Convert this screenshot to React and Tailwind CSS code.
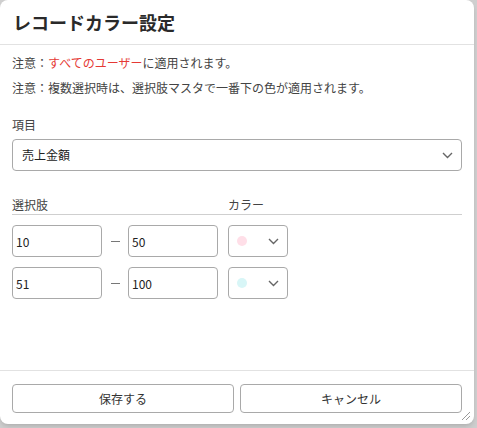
import React from 'react';

const font = { fontFamily: '"Noto Sans CJK JP", "Noto Sans", sans-serif' };

const Chevron = ({ className = '' }) => (
  <svg className={className} width="11" height="7" viewBox="0 0 11 7" fill="none">
    <path d="M1 1l4.5 4.5L10 1" stroke="#666" strokeWidth="1.4" />
  </svg>
);

const ChoiceRow = ({ from, to, dot }) => (
  <div className="flex items-center">
    <input
      defaultValue={from}
      className="w-[90px] h-[32px] border border-[#a9a9a9] rounded px-[3px] text-[12px] text-[#222] outline-none"
    />
    <div className="w-[26px] flex justify-center">
      <span className="w-[9px] h-px bg-[#777]" />
    </div>
    <input
      defaultValue={to}
      className="w-[90px] h-[32px] border border-[#a9a9a9] rounded px-[3px] text-[12px] text-[#222] outline-none"
    />
    <div className="ml-[10px] w-[60px] h-[32px] border border-[#a9a9a9] rounded flex items-center pl-[8px] pr-[8px] justify-between">
      <span className={`w-[10px] h-[10px] rounded-full ${dot}`} />
      <Chevron />
    </div>
  </div>
);

export default function App() {
  return (
    <div className="w-[477px] h-[428px] bg-[#cfcfcf] overflow-hidden" style={font}>
      <div className="relative w-[474px] h-[424px] bg-white rounded-lg shadow-md flex flex-col text-[#333]">
        <div className="h-[45px] border-b border-[#e2e2e2] px-[13px] flex items-center">
          <h1 className="text-[18px] font-bold text-[#2a2a2a]">レコードカラー設定</h1>
        </div>

        <div className="flex-1 px-3 pt-[5px]">
          <p className="text-[12px] leading-[25px] text-[#444]">
            注意：<span className="text-[#e53935]">すべてのユーザー</span>に適用されます。
          </p>
          <p className="text-[12px] leading-[25px] text-[#444]">
            注意：複数選択時は、選択肢マスタで一番下の色が適用されます。
          </p>

          <div className="mt-[16px] text-[12px] leading-[18px] text-[#444]">項目</div>
          <div className="mt-[5px] h-[32px] border border-[#a9a9a9] rounded flex items-center justify-between pl-[9px] pr-[8px]">
            <span className="text-[12px] text-[#222]">売上金額</span>
            <Chevron />
          </div>

          <div className="mt-[25px] flex text-[12px] leading-[18px] text-[#444] border-b border-[#cfcfcf]">
            <span className="w-[216px]">選択肢</span>
            <span>カラー</span>
          </div>

          <div className="mt-[10px] flex flex-col gap-[10px]">
            <ChoiceRow from="10" to="50" dot="bg-[#ffdfe8]" />
            <ChoiceRow from="51" to="100" dot="bg-[#d8f6f7]" />
          </div>
        </div>

        <div className="border-t border-[#e2e2e2] px-3 pt-[13px] pb-[11px] flex gap-[6px]">
          <button className="flex-1 h-[29px] border border-[#a9a9a9] rounded text-[12px] text-[#333] bg-white">
            保存する
          </button>
          <button className="flex-1 h-[29px] border border-[#a9a9a9] rounded text-[12px] text-[#333] bg-white">
            キャンセル
          </button>
        </div>

        <svg className="absolute right-[3px] bottom-[3px]" width="10" height="10" viewBox="0 0 10 10">
          <path d="M9 1L1 9M9 5L5 9" stroke="#999" strokeWidth="1" />
        </svg>
      </div>
    </div>
  );
}
